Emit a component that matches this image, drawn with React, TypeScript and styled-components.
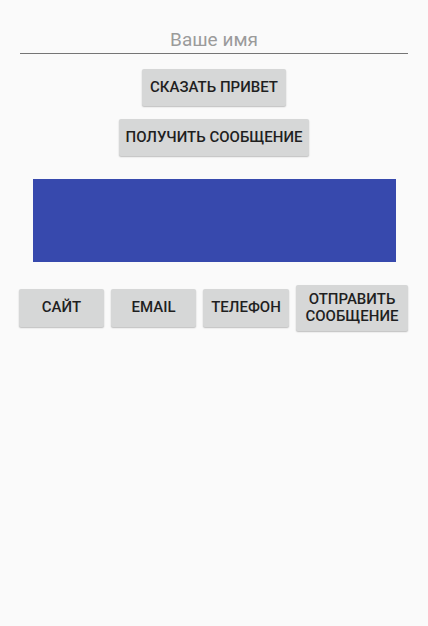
import React from "react";
import styled, { createGlobalStyle } from "styled-components";

const Global = createGlobalStyle`
  html, body { margin: 0; padding: 0; background: #fafafa; }
  body { font-family: Roboto, "Noto Sans", sans-serif; }
`;

const Screen = styled.div`
  width: 428px;
  height: 626px;
  background: #fafafa;
  display: flex;
  flex-direction: column;
  align-items: center;
  padding: 26px 20px 0;
  box-sizing: border-box;
`;

const NameField = styled.div`
  align-self: stretch;
  height: 27px;
  border-bottom: 1px solid #757575;
  display: flex;
  align-items: flex-start;
  justify-content: center;
  font-size: 19px;
  line-height: 27px;
  color: #9b9b9b;
  margin-bottom: 15px;
`;

const Button = styled.div<{ $w?: number; $h?: number }>`
  box-sizing: border-box;
  width: ${(p) => (p.$w ? `${p.$w}px` : "auto")};
  height: ${(p) => p.$h ?? 37}px;
  padding: 0 6px;
  background: #d6d7d7;
  border-radius: 2px;
  box-shadow: 0 1px 1.5px rgba(0, 0, 0, 0.25);
  display: flex;
  align-items: center;
  justify-content: center;
  text-align: center;
  font-family: Roboto, sans-serif;
  font-weight: 500;
  font-size: 15px;
  line-height: 17.5px;
  color: #1f1f1f;
  text-transform: uppercase;
  white-space: nowrap;
  flex-shrink: 0;
`;

const TopButtons = styled.div`
  display: flex;
  flex-direction: column;
  align-items: center;
  gap: 13px;
`;

const ColorBox = styled.div`
  width: 363px;
  height: 83px;
  background: #3749ad;
  margin-top: 23px;
`;

const ActionRow = styled.div`
  align-self: stretch;
  display: flex;
  align-items: center;
  gap: 7px;
  margin-top: 23px;
  margin-left: -1px;
`;

export default function App() {
  return (
    <>
      <Global />
      <Screen>
        <NameField>Ваше имя</NameField>
        <TopButtons>
          <Button $w={144}>Сказать привет</Button>
          <Button $w={190}>Получить сообщение</Button>
        </TopButtons>
        <ColorBox />
        <ActionRow>
          <Button $w={85} $h={38}>Сайт</Button>
          <Button $w={85} $h={38}>Email</Button>
          <Button $w={86} $h={38}>Телефон</Button>
          <Button $w={112} $h={46}>
            Отправить
            <br />
            сообщение
          </Button>
        </ActionRow>
      </Screen>
    </>
  );
}
